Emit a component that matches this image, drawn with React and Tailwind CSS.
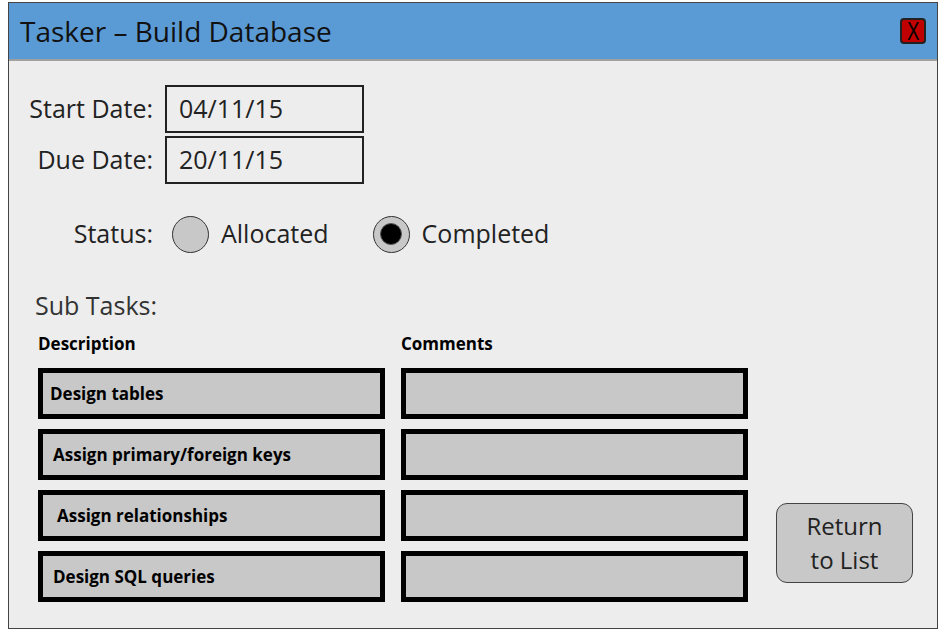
import React from 'react';

const subTasks = [
  { text: 'Design tables', pad: 'pl-[7px]' },
  { text: 'Assign primary/foreign keys', pad: 'pl-[10px]' },
  { text: 'Assign relationships', pad: 'pl-[14px]' },
  { text: 'Design SQL queries', pad: 'pl-[10px]' },
];

const Radio = ({ checked, label }) => (
  <div className="flex items-center gap-3">
    <div className="w-[37px] h-[37px] rounded-full border-[1.5px] border-[#333] bg-[#c8c8c8] flex items-center justify-center">
      {checked && <div className="w-[22px] h-[22px] rounded-full bg-black border border-[#555]" />}
    </div>
    <span>{label}</span>
  </div>
);

export default function App() {
  return (
    <div className="w-[940px] h-[631px] bg-white pt-[2px] pl-[8px] font-['Open_Sans',sans-serif] text-[#222]">
      <div className="w-[930px] h-[627px] border border-[#444] flex flex-col bg-[#ededed]">
        {/* Title bar */}
        <div className="h-[58px] bg-[#5b9bd5] border-b-2 border-[#a0a0a0] flex items-center justify-between pl-[11px] pr-[11px]">
          <span className="text-[28px] text-[#111]">Tasker – Build Database</span>
          <div className="w-[26px] h-[26px] bg-[#c00000] border-2 border-[#222] rounded-[4px] flex items-center justify-center overflow-hidden">
            <span className="text-[25px] leading-none text-black font-['Liberation_Sans',sans-serif] scale-x-75">X</span>
          </div>
        </div>

        {/* Body */}
        <div className="flex-1 pt-[24px] text-[25px]">
          <div className="flex flex-col gap-[3px]">
            <div className="flex items-center">
              <div className="w-[144px] text-right">Start Date:</div>
              <div className="ml-[12px] w-[199px] h-[48px] border-2 border-[#222] flex items-center pl-[12px]">04/11/15</div>
            </div>
            <div className="flex items-center">
              <div className="w-[144px] text-right">Due Date:</div>
              <div className="ml-[12px] w-[199px] h-[48px] border-2 border-[#222] flex items-center pl-[12px]">20/11/15</div>
            </div>
          </div>

          <div className="flex items-center mt-[30px] h-[40px]">
            <div className="w-[144px] text-right">Status:</div>
            <div className="ml-[19px] flex items-center gap-[44px]">
              <Radio label="Allocated" />
              <Radio checked label="Completed" />
            </div>
          </div>

          <div className="mt-[36px] pl-[26px] h-[30px] leading-[30px] text-[#333]">Sub Tasks:</div>

          <div className="mt-[12px] pl-[29px] flex">
            <div className="flex flex-col">
              <div className="flex gap-[16px] h-[24px] leading-[24px] text-[17px] font-bold text-black">
                <div className="w-[347px]">Description</div>
                <div className="w-[347px]">Comments</div>
              </div>
              <div className="mt-[12px] flex flex-col gap-[10px]">
                {subTasks.map((t) => (
                  <div key={t.text} className="flex gap-[16px]">
                    <div className={`w-[347px] h-[51px] border-[5px] border-black bg-[#c8c8c8] flex items-center ${t.pad} text-[17px] font-bold text-black`}>
                      {t.text}
                    </div>
                    <div className="w-[347px] h-[51px] border-[5px] border-black bg-[#c8c8c8]" />
                  </div>
                ))}
              </div>
            </div>
            <div className="ml-[28px] self-end mb-[19px]">
              <button className="w-[137px] h-[80px] rounded-[11px] border-[1.5px] border-[#444] bg-[#c8c8c8] text-[24px] leading-[34px] text-[#222] flex flex-col items-center justify-center">
                <span>Return</span>
                <span>to List</span>
              </button>
            </div>
          </div>
        </div>
      </div>
    </div>
  );
}
